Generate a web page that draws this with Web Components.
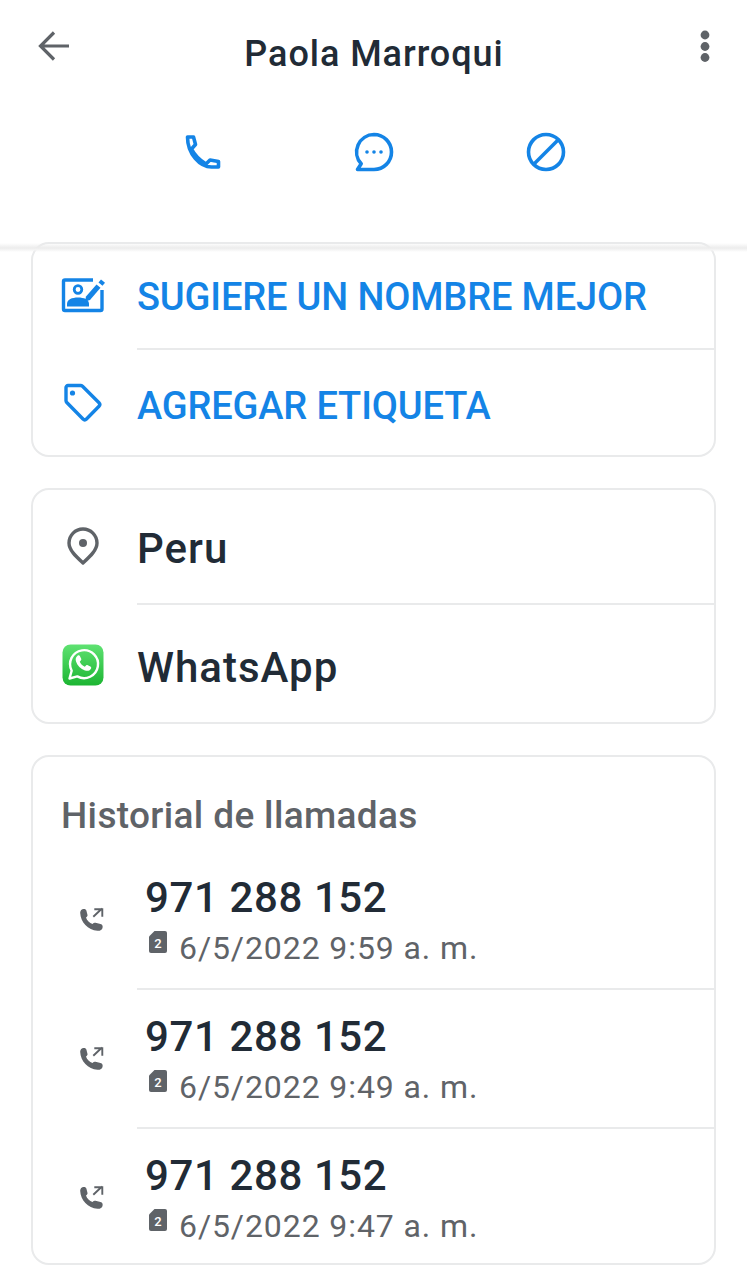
<!DOCTYPE html>
<html lang="es">
<head>
<meta charset="utf-8">
<title>Paola Marroqui</title>
<style>
html, body { margin: 0; background: #fff; }
body { font-family: Roboto, "Noto Sans", sans-serif; color: #212b36; width: 747px; height: 1280px; overflow: hidden; }
</style>
</head>
<body>
<contact-header name="Paola Marroqui"></contact-header>
<main-list>
	<info-card style="height:215px">
		<info-row accent style="--row:105px;--shift:1px;--icon-shift:-4px">
			<svg slot="icon" width="46" height="38" viewBox="0 0 46 38" fill="none"><path d="M33 4H5a1.500 1.500 0 0 0-1.500 1.500v27.500A1.500 1.500 0 0 0 5 34.500h35.500a1.500 1.500 0 0 0 1.500-1.500V14" stroke="#1484e6" stroke-width="3.400"/><circle cx="18" cy="13.500" r="3.800" stroke="#1484e6" stroke-width="2.800"/><path d="M7 30.500v-2.500c0-4.500 5-6.500 11-6.500s11 2 11 6.500v2.500z" fill="#1484e6"/><path d="M26 20.500L36.500 8.500l4 3.300L30 24l-5 1.500z" fill="#1484e6"/><path d="M38.500 6.500l2.500-3 4 3.300-2.500 3z" fill="#1484e6"/></svg>
			SUGIERE UN NOMBRE MEJOR
		</info-row>
		<info-row accent divided style="--row:106px;--shift:8px;--icon-shift:2px">
			<svg slot="icon" width="42" height="42" viewBox="0 0 42 42" fill="none"><path d="M4 5.500A2 2 0 0 1 6 3.500h12.500a3 3 0 0 1 2 .8l16.500 16.500a2.500 2.500 0 0 1 0 3.500L24.500 37a2.500 2.500 0 0 1-3.500 0L4.800 20.500a3 3 0 0 1-.8-2z" stroke="#1484e6" stroke-width="3.400" stroke-linejoin="round"/><circle cx="10.500" cy="11" r="2.600" fill="#1484e6"/></svg>
			AGREGAR ETIQUETA
		</info-row>
	</info-card>
	<info-card style="height:236px">
		<info-row large style="--row:114px;--shift:4px;--icon-shift:-2px">
			<svg slot="icon" width="42" height="42" viewBox="0 0 42 42" fill="none"><path d="M21 38C13.500 31 7 25 7 18a14 14 0 0 1 28 0c0 7-6.500 13-14 20z" stroke="#5f6368" stroke-width="3.400" stroke-linejoin="round"/><circle cx="21" cy="18" r="4" fill="#5f6368"/></svg>
			Peru
		</info-row>
		<info-row large divided style="--row:117px;--shift:11px;--icon-shift:4px">
			<svg slot="icon" width="42" height="42" viewBox="0 0 42 42" fill="none"><defs><linearGradient id="wa" x1="0" y1="0" x2="0" y2="1"><stop offset="0" stop-color="#5fe272"/><stop offset="1" stop-color="#1cb532"/></linearGradient></defs><rect x=".5" y=".5" width="41" height="41" rx="8" fill="url(#wa)"/><path d="M7.500 34.500l2.200-7.800A14 14 0 1 1 15.300 32.400z" fill="none" stroke="#fff" stroke-width="2.400" stroke-linejoin="round"/><path d="M15.500 11.800c1-.8 2-.6 2.500.4l1.200 2.600c.3.700.1 1.300-.4 1.800l-1 1.100c.9 2.200 2.700 4 5 5l1.200-1.200c.5-.5 1.200-.6 1.800-.3l2.600 1.300c.9.500 1.100 1.500.4 2.500-1.300 1.900-3.400 2.300-5.800 1.400-4.400-1.700-7.600-4.800-9-9-.7-2.300-.2-4.200 1.500-5.600z" fill="#fff"/></svg>
			WhatsApp
		</info-row>
	</info-card>
	<info-card style="height:510px" padded>
		<span slot="title">Historial de llamadas</span>
		<call-row number="971 288 152" when="6/5/2022 9:59 a. m."></call-row>
		<call-row number="971 288 152" when="6/5/2022 9:49 a. m." divided></call-row>
		<call-row number="971 288 152" when="6/5/2022 9:47 a. m." divided></call-row>
	</info-card>
</main-list>

<script>
// top bar with title and the three round actions
class ContactHeader extends HTMLElement {
	connectedCallback() {
		if (this.shadowRoot) return;
		this.attachShadow({ mode: 'open' });
		this.shadowRoot.innerHTML = `
<style>
:host { display: block; height: 242px; position: relative; z-index: 2; }
.top { display: grid; grid-template-columns: 1fr auto 1fr; align-items: start; padding: 26px 36px 0 37px; height: 98px; box-sizing: border-box; }
.back { margin: 5px 0 0 1px; }
.more { justify-self: end; }
h1 { margin: 6px 0 0; font: 500 36px/44px Roboto, sans-serif; letter-spacing: .95px; color: #212b36; }
.actions { display: flex; justify-content: center; gap: 132px; padding-top: 34px; }
.band { position: absolute; left: 0; right: 0; top: 243px; height: 9px; background: linear-gradient(#ffffff00, #ececec 55%, #f4f4f4 75%, #ffffff00); pointer-events: none; }
svg { display: block; }
</style>
<div class="top">
	<svg class="back" width="32" height="30" viewBox="0 0 32 30" fill="none" stroke="#5f6368" stroke-width="3.200"><path d="M31 15H3M16 1.500L2.500 15 16 28.500"/></svg>
	<h1></h1>
	<svg class="more" width="12" height="38" viewBox="0 0 12 38" fill="#5f6368"><circle cx="6" cy="9" r="4.400"/><circle cx="6" cy="20.500" r="4.400"/><circle cx="6" cy="31.500" r="4.400"/></svg>
</div>
<div class="actions">
	<svg width="40" height="40" viewBox="0 0 40 40" fill="none" stroke="#1484e6" stroke-width="3.600" stroke-linejoin="round"><path d="M5.500 5h6l2 7.500-4 4.500c3 6 8 11 14.500 15l4-4 8.500 1.500V35h-7C18 35 5.500 22 5.500 5z"/></svg>
	<svg width="40" height="40" viewBox="0 0 40 40" fill="none"><path d="M20 2.500a17.500 17.500 0 1 1 0 35H3.500l3.700-5.700A17.500 17.500 0 0 1 20 2.500z" stroke="#1484e6" stroke-width="3.600" stroke-linejoin="round"/><circle cx="13" cy="20" r="1.800" fill="#1484e6"/><circle cx="20" cy="20" r="1.800" fill="#1484e6"/><circle cx="27" cy="20" r="1.800" fill="#1484e6"/></svg>
	<svg width="40" height="40" viewBox="0 0 40 40" fill="none" stroke="#1484e6" stroke-width="3.600"><circle cx="20" cy="20" r="17.500"/><path d="M8 32L32 8"/></svg>
</div>
<div class="band"></div>`;
		this.shadowRoot.querySelector('h1').textContent = this.getAttribute('name');
	}
}

// column holding the cards
class MainList extends HTMLElement {
	constructor() {
		super();
		this.attachShadow({ mode: 'open' });
		this.shadowRoot.innerHTML = `
<style>
:host { display: flex; flex-direction: column; gap: 31px; padding: 0 31px; }
</style>
<slot></slot>`;
	}
}

class InfoCard extends HTMLElement {
	constructor() {
		super();
		this.attachShadow({ mode: 'open' });
		this.shadowRoot.innerHTML = `
<style>
:host { display: flex; flex-direction: column; flex: none; box-sizing: border-box; border: 2px solid #e9eaeb; border-radius: 18px; background: #fff; overflow: hidden; }
.title { display: none; font: 500 37px/44px Roboto, sans-serif; letter-spacing: .35px; color: #5f6368; padding: 37px 0 12px 28px; }
:host([padded]) .title { display: block; }
</style>
<div class="title"><slot name="title"></slot></div>
<slot></slot>`;
	}
}

class InfoRow extends HTMLElement {
	constructor() {
		super();
		this.attachShadow({ mode: 'open' });
		this.shadowRoot.innerHTML = `
<style>
:host { display: flex; flex: none; height: var(--row, 106px); align-items: center; position: relative; font: 500 38px/44px Roboto, sans-serif; letter-spacing: -.15px; color: #212b36; }
:host([accent]) { color: #1484e6; }
:host([large]) { font-size: 42px; line-height: 50px; letter-spacing: 1px; }
:host([divided])::before { content: ""; position: absolute; top: -1px; left: 104px; right: 0; height: 2px; background: #e9eaeb; }
.icon { width: 100px; margin-right: 4px; display: flex; justify-content: center; }
.icon ::slotted(svg) { display: block; margin-top: var(--icon-shift, 0); }
.text { padding-top: var(--shift, 0); }
</style>
<div class="icon"><slot name="icon"></slot></div>
<div class="text"><slot></slot></div>`;
	}
}

class CallRow extends HTMLElement {
	connectedCallback() {
		if (this.shadowRoot) return;
		this.attachShadow({ mode: 'open' });
		this.shadowRoot.innerHTML = `
<style>
:host { display: flex; flex: none; height: 139px; box-sizing: border-box; position: relative; align-items: flex-start; }
:host([divided])::before { content: ""; position: absolute; top: -1px; left: 104px; right: 0; height: 2px; background: #e9eaeb; }
.icon { width: 112px; padding: 55px 0 0 44px; box-sizing: border-box; }
.body { padding-top: 23px; }
.num { font: 500 42px/50px Roboto, sans-serif; color: #212b36; letter-spacing: .6px; }
.meta { display: flex; align-items: flex-start; margin-top: 6px; gap: 12px; font: 400 32px/38px Roboto, sans-serif; color: #5f6368; letter-spacing: .9px; }
.sim { position: relative; width: 18px; height: 22px; margin: 2px 0 0 4px; }
.sim b { position: absolute; inset: 3px 0 0 0; font: 500 13px/19px Roboto, sans-serif; color: #fff; text-align: center; letter-spacing: 0; }
.sim svg { position: absolute; inset: 0; }
svg { display: block; }
</style>
<div class="icon">
	<svg width="28" height="28" viewBox="0 0 28 28" fill="none" stroke="#5f6368"><path d="M5 4.500C7 3.500 9 4 9.500 6L10.500 10C10.700 11 10 11.800 9 12.500C10 15.500 12.500 18 15.500 19C16.500 18 17.300 17.500 18.500 17.800L23.500 19C25.500 19.500 26 21 25.500 23C25 25 23 26 20.500 25.800C11 25 3.500 17 3.200 8C3.100 6.500 3.800 5 5 4.500z" fill="#5f6368" stroke="none"/><path d="M16.300 11.700L25 3.500M17.300 4.300h8v7.400" stroke-width="1.900"/></svg>
</div>
<div class="body">
	<div class="num"></div>
	<div class="meta">
		<span class="sim">
			<svg width="18" height="22" viewBox="0 0 18 22" fill="#5f6368"><path d="M5.500 0H16a2 2 0 0 1 2 2v18a2 2 0 0 1-2 2H2a2 2 0 0 1-2-2V5.500z"/></svg>
			<b>2</b>
		</span>
		<span class="when"></span>
	</div>
</div>`;
		this.shadowRoot.querySelector('.num').textContent = this.getAttribute('number');
		this.shadowRoot.querySelector('.when').textContent = this.getAttribute('when');
	}
}

customElements.define('contact-header', ContactHeader);
customElements.define('main-list', MainList);
customElements.define('info-card', InfoCard);
customElements.define('info-row', InfoRow);
customElements.define('call-row', CallRow);
</script>
</body>
</html>
